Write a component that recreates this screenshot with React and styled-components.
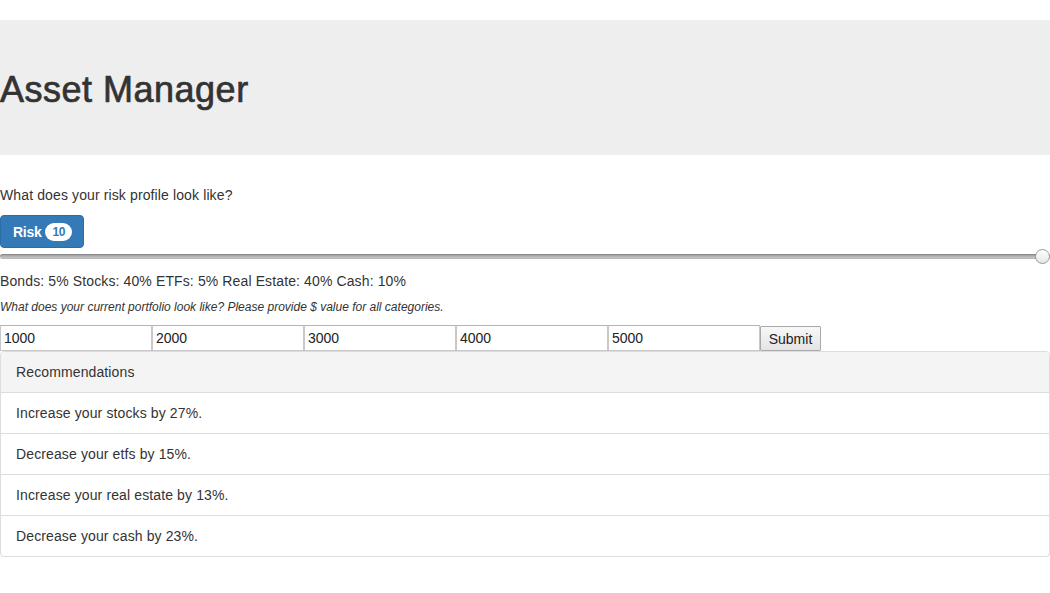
import React, { useState } from 'react'
import styled, { createGlobalStyle } from 'styled-components'

const recommendations = [
    'Increase your stocks by 27%.',
    'Decrease your etfs by 15%.',
    'Increase your real estate by 13%.',
    'Decrease your cash by 23%.',
]

function App() {
    const [risk, setRisk] = useState(10)
    const [values, setValues] = useState(['1000', '2000', '3000', '4000', '5000'])

    return (
        <>
            <GlobalStyle />
            <Page>
                <Jumbotron>
                    <Title>Asset Manager</Title>
                </Jumbotron>
                <Question>What does your risk profile look like?</Question>
                <RiskBtn type='button'>
                    Risk <Badge>{risk}</Badge>
                </RiskBtn>
                <Slider type='range' min='1' max='10' value={risk}
                    onChange={(event) => setRisk(Number(event.target.value))} />
                <Allocation>Bonds: 5% Stocks: 40% ETFs: 5% Real Estate: 40% Cash: 10%</Allocation>
                <Hint>What does your current portfolio look like? Please provide $ value for all categories.</Hint>
                <Stform onSubmit={(event) => event.preventDefault()}>
                    {values.map((v, i) => (
                        <Stinput key={i} type='text' value={v}
                            onChange={(event) => {
                                const next = [...values]
                                next[i] = event.target.value
                                setValues(next)
                            }} />
                    ))}
                    <SubmitBtn type='submit'>Submit</SubmitBtn>
                </Stform>
                <Panel>
                    <PanelHeading>Recommendations</PanelHeading>
                    {recommendations.map((text) => (
                        <ListItem key={text}>{text}</ListItem>
                    ))}
                </Panel>
            </Page>
        </>
    )
}

const GlobalStyle = createGlobalStyle`
    body {
        margin: 0;
        background: #ffffff;
        color: #333333;
        font-family: "Liberation Sans", Arial, sans-serif;
        font-size: 14px;
        line-height: 20px;
        letter-spacing: 0.12px;
    }
    * { box-sizing: border-box; }
`

const Page = styled.div`
    display: flex;
    flex-direction: column;
    align-items: flex-start;
    padding-top: 20px;
`
const Jumbotron = styled.div`
    align-self: stretch;
    background: #eeeeee;
    padding: 50px 0 45px;
`
const Title = styled.h1`
    margin: 0;
    font-size: 36px;
    line-height: 40px;
    font-weight: 400;
    letter-spacing: 0.5px;
    -webkit-text-stroke: 0.7px #333333;
    color: #333333;
`
const Question = styled.p`
    margin: 30px 0 10px;
`
const RiskBtn = styled.button`
    display: flex;
    align-items: center;
    gap: 4px;
    height: 33px;
    padding: 0 11px 0 12px;
    border: 1px solid #2e6da4;
    border-radius: 4px;
    background: #337ab7;
    color: #ffffff;
    font-family: inherit;
    font-size: 14px;
    font-weight: 700;
    letter-spacing: -0.3px;
`
const Badge = styled.span`
    display: inline-block;
    min-width: 10px;
    padding: 3px 7px;
    border-radius: 10px;
    background: #ffffff;
    color: #337ab7;
    font-size: 12px;
    font-weight: 700;
    line-height: 12px;
`
const Slider = styled.input`
    -webkit-appearance: none;
    appearance: none;
    align-self: stretch;
    width: 100%;
    height: 16px;
    margin: 0;
    background: transparent;

    &::-webkit-slider-runnable-track {
        height: 5px;
        border-radius: 3px;
        border-top: 1px solid #8a8a8a;
        border-bottom: 1px solid #b8b8b8;
        background: linear-gradient(#a0a0a0, #c8c8c8);
    }
    &::-webkit-slider-thumb {
        -webkit-appearance: none;
        width: 15px;
        height: 15px;
        margin-top: -6px;
        border-radius: 50%;
        border: 1px solid #9a9a9a;
        background: linear-gradient(#ffffff, #e6e6e6);
    }
`
const Allocation = styled.p`
    margin: 7px 0 0;
`
const Hint = styled.p`
    margin: 7px 0 0;
    font-size: 12px;
    font-style: italic;
    line-height: 18px;
    letter-spacing: 0;
`
const Stform = styled.form`
    display: flex;
    align-items: flex-end;
    margin-top: 9px;
`
const Stinput = styled.input`
    width: 152px;
    height: 26px;
    padding: 0 3px;
    border: 1px solid #c8c8c8;
    border-top-color: #b4b4b4;
    font-family: inherit;
    font-size: 14px;
    color: #222222;
`
const SubmitBtn = styled.button`
    width: 61px;
    height: 25px;
    padding: 0;
    border: 1px solid #a9a9a9;
    border-radius: 1px;
    background: linear-gradient(#f8f8f8, #e4e4e4);
    font-family: inherit;
    font-size: 14px;
    color: #222222;
`
const Panel = styled.div`
    align-self: stretch;
    border: 1px solid #dddddd;
    border-radius: 4px;
    box-shadow: 0 1px 1px rgba(0, 0, 0, 0.05);
`
const PanelHeading = styled.div`
    padding: 10px 15px;
    background: #f4f4f4;
    border-bottom: 1px solid #dddddd;
    border-radius: 3px 3px 0 0;
`
const ListItem = styled.div`
    padding: 10px 15px;
    & + & {
        border-top: 1px solid #dddddd;
    }
`

export default App
